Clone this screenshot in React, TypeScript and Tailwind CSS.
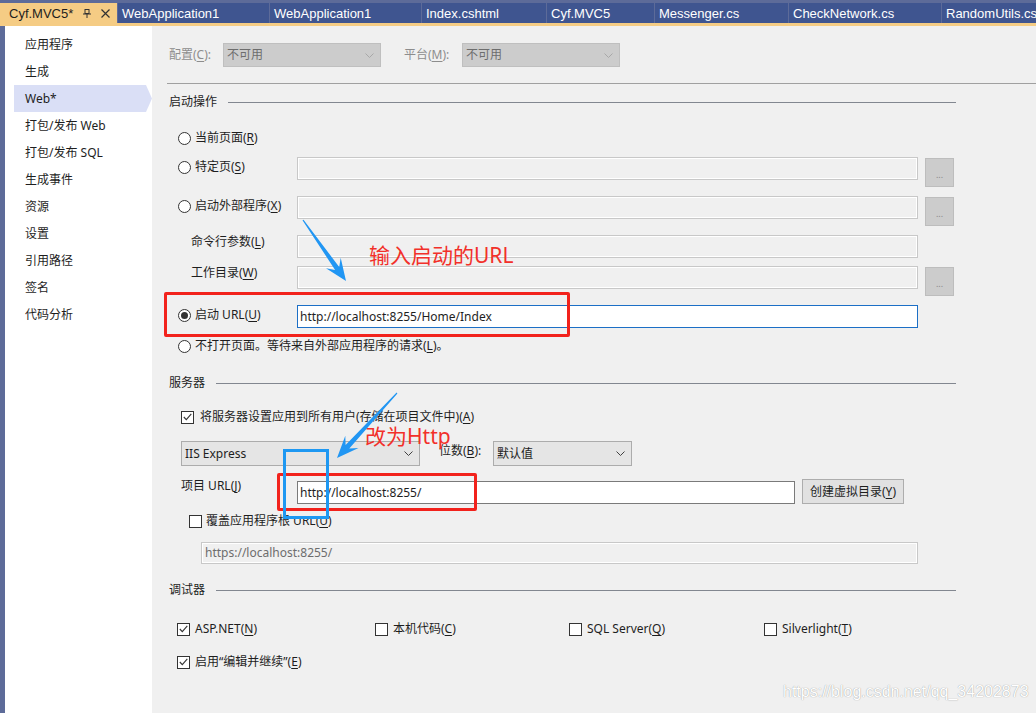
import React from "react";

const tabs = [
  { label: "WebApplication1", w: "w-[151px]" },
  { label: "WebApplication1", w: "w-[151px]" },
  { label: "Index.cshtml", w: "w-[124px]" },
  { label: "Cyf.MVC5", w: "w-[107px]" },
  { label: "Messenger.cs", w: "w-[133px]" },
  { label: "CheckNetwork.cs", w: "w-[152px]" },
  { label: "RandomUtils.cs", w: "flex-1" },
];

const navItems = [
  "应用程序",
  "生成",
  "Web*",
  "打包/发布 Web",
  "打包/发布 SQL",
  "生成事件",
  "资源",
  "设置",
  "引用路径",
  "签名",
  "代码分析",
];

function U({ children }: { children: React.ReactNode }) {
  return <span className="underline underline-offset-[2px]">{children}</span>;
}

function Radio({ checked = false }: { checked?: boolean }) {
  return (
    <span className="w-[13px] h-[13px] shrink-0 rounded-full border border-[#333333] bg-white flex items-center justify-center">
      {checked && <span className="w-[7px] h-[7px] rounded-full bg-[#333333]" />}
    </span>
  );
}

function Check({ checked = false }: { checked?: boolean }) {
  return (
    <span className="w-[13px] h-[13px] shrink-0 border border-[#333333] bg-white flex items-center justify-center">
      {checked && (
        <svg width="9" height="8" viewBox="0 0 9 8">
          <polyline points="0.8,4 3.3,6.6 8.3,0.8" fill="none" stroke="#333333" strokeWidth="1.1" />
        </svg>
      )}
    </span>
  );
}

function Chevron({ color }: { color: string }) {
  return (
    <svg width="9" height="5" viewBox="0 0 9 5">
      <polyline points="0.5,0.5 4.5,4.5 8.5,0.5" fill="none" stroke={color} strokeWidth="1" />
    </svg>
  );
}

function DisabledInput({ className = "", children }: { className?: string; children?: React.ReactNode }) {
  return (
    <div
      className={
        "border border-[#c8c8c8] bg-[#f0f0f0] shadow-[inset_0_0_0_1px_#ffffff] flex items-center pl-[3px] text-[#6d6d6d] " +
        className
      }
    >
      {children}
    </div>
  );
}

function Dots({ className = "" }: { className?: string }) {
  return (
    <div
      className={
        "w-[29px] h-[29px] bg-[#cccccc] border border-[#bdbdbd] flex items-end justify-center pb-[7px] text-[9px] leading-none text-[#8a8a8a] " +
        className
      }
    >
      ...
    </div>
  );
}

function Header({ children, className = "" }: { children: React.ReactNode; className?: string }) {
  return (
    <div className={"flex items-center h-[16px] w-[787px] " + className}>
      <span>{children}</span>
      <div className="flex-1 h-px bg-[#828790] ml-[11px]" />
    </div>
  );
}

function arrowPoints(tx: number, ty: number, px: number, py: number, L: number, W: number, b: number) {
  const dx = px - tx;
  const dy = py - ty;
  const len = Math.hypot(dx, dy);
  const ux = dx / len;
  const uy = dy / len;
  const nx = -uy;
  const ny = ux;
  const bx = px - L * ux;
  const by = py - L * uy;
  const mx = px - L * 0.7 * ux;
  const my = py - L * 0.7 * uy;
  return [
    [tx + 0.6 * nx, ty + 0.6 * ny],
    [mx + b * nx, my + b * ny],
    [bx + W * nx, by + W * ny],
    [px, py],
    [bx - W * nx, by - W * ny],
    [mx - b * nx, my - b * ny],
    [tx - 0.6 * nx, ty - 0.6 * ny],
  ]
    .map((p) => p[0].toFixed(1) + "," + p[1].toFixed(1))
    .join(" ");
}

export default function App() {
  return (
    <div className="relative w-[1036px] h-[713px] overflow-hidden bg-[#f0f0f0] font-['Noto_Sans','Noto_Sans_CJK_SC',sans-serif] text-[#1e1e1e]">
      {/* tab strip */}
      <div className="h-[26px] bg-[#5d6b99] pt-[3px] flex flex-col">
        <div className="h-[20px] flex gap-[1px] font-['Liberation_Sans','Noto_Sans_CJK_SC',sans-serif] text-[13px] leading-none">
          <div className="w-[117px] bg-[#f5cc84] flex items-center pl-[9px] text-[#1e1e1e]">
            <span>Cyf.MVC5*</span>
            <svg className="ml-[10px]" width="8" height="9" viewBox="0 0 8 9">
              <rect x="2" y="0.5" width="4" height="4" fill="none" stroke="#333" strokeWidth="1" />
              <line x1="0" y1="5" x2="8" y2="5" stroke="#333" strokeWidth="1" />
              <line x1="4" y1="5" x2="4" y2="9" stroke="#333" strokeWidth="1" />
            </svg>
            <svg className="ml-[10px]" width="9" height="9" viewBox="0 0 9 9">
              <path d="M0.5 0.5 L8.5 8.5 M8.5 0.5 L0.5 8.5" stroke="#333" strokeWidth="1.2" />
            </svg>
          </div>
          {tabs.map((t, i) => (
            <div key={i} className={t.w + " bg-[#3f5590] flex items-center pl-[4px] text-white whitespace-nowrap overflow-hidden"}>
              {t.label}
            </div>
          ))}
        </div>
        <div className="h-[3px] bg-[#f5cc84]" />
      </div>

      <div className="flex h-[687px]">
        <div className="w-[5px] bg-[#5d6b99]" />

        {/* sidebar */}
        <div className="w-[147px] bg-white pt-[5px] text-[12px] leading-none">
          {navItems.map((item) =>
            item === "Web*" ? (
              <div key={item} className="relative ml-[9px] w-[132px] h-[27px] bg-[#dadff6] flex items-center pl-[11px]">
                {item}
                <div className="absolute left-full top-0 h-full w-[6px] bg-[#dadff6] [clip-path:polygon(0_0,100%_50%,0_100%)]" />
              </div>
            ) : (
              <div key={item} className="h-[27px] flex items-center pl-[20px]">
                {item}
              </div>
            )
          )}
        </div>

        {/* main page */}
        <div className="flex-1 pl-[17px] pt-[17px] text-[12px] leading-none">
          <div className="flex items-center h-[24px]">
            <span className="w-[54px] text-[#8d8d8d]">
              配置(<U>C</U>):
            </span>
            <div className="w-[158px] h-full bg-[#cccccc] border border-[#bfbfbf] flex items-center justify-between pl-[3px] pr-[6px] text-[#6d6d6d]">
              <span>不可用</span>
              <Chevron color="#a8a8a8" />
            </div>
            <span className="ml-[23px] w-[58px] text-[#8d8d8d]">
              平台(<U>M</U>):
            </span>
            <div className="w-[158px] h-full bg-[#cccccc] border border-[#bfbfbf] flex items-center justify-between pl-[3px] pr-[6px] text-[#6d6d6d]">
              <span>不可用</span>
              <Chevron color="#a8a8a8" />
            </div>
          </div>

          <div className="mt-[16px] -ml-[2px] h-px bg-[#a0a0a0]" />

          <Header className="mt-[10px]">启动操作</Header>

          <div className="mt-[20px] ml-[9px] flex items-center h-[16px] gap-[4px]">
            <Radio />
            <span>
              当前页面(<U>R</U>)
            </span>
          </div>

          <div className="mt-[11px] ml-[9px] flex items-start h-[30px]">
            <div className="w-[119px] h-[20px] flex items-center gap-[4px]">
              <Radio />
              <span>
                特定页(<U>S</U>)
              </span>
            </div>
            <DisabledInput className="w-[621px] h-[23px]" />
            <Dots className="ml-[7px] mt-[1px]" />
          </div>

          <div className="mt-[9px] ml-[9px] flex items-start h-[30px]">
            <div className="w-[119px] h-[20px] flex items-center gap-[4px]">
              <Radio />
              <span>
                启动外部程序(<U>X</U>)
              </span>
            </div>
            <DisabledInput className="w-[621px] h-[23px]" />
            <Dots className="ml-[7px] mt-[1px]" />
          </div>

          <div className="mt-[9px] ml-[9px] flex items-start h-[23px]">
            <div className="w-[119px] h-[14px] flex items-center pl-[13px]">
              命令行参数(<U>L</U>)
            </div>
            <DisabledInput className="w-[621px] h-[23px]" />
          </div>

          <div className="mt-[8px] ml-[9px] flex items-start h-[30px]">
            <div className="w-[119px] h-[14px] flex items-center pl-[13px]">
              工作目录(<U>W</U>)
            </div>
            <DisabledInput className="w-[621px] h-[23px]" />
            <Dots className="ml-[7px] mt-[1px]" />
          </div>

          <div className="mt-[9px] ml-[9px] flex items-start h-[23px]">
            <div className="w-[119px] h-[20px] flex items-center gap-[4px]">
              <Radio checked />
              <span>
                启动 URL(<U>U</U>)
              </span>
            </div>
            <div className="w-[621px] h-[23px] bg-white border border-[#1c6fc6] flex items-center pl-[2px]">
              http://localhost:8255/Home/Index
            </div>
          </div>

          <div className="mt-[10px] ml-[9px] flex items-center h-[16px] gap-[4px]">
            <Radio />
            <span>
              不打开页面。等待来自外部应用程序的请求(<U>L</U>)。
            </span>
          </div>

          <Header className="mt-[21px]">服务器</Header>

          <div className="mt-[18px] ml-[12px] flex items-center h-[16px] gap-[6px]">
            <Check checked />
            <span>
              将服务器设置应用到所有用户(存储在项目文件中)(<U>A</U>)
            </span>
          </div>

          <div className="mt-[16px] ml-[12px] flex items-start h-[25px]">
            <div className="w-[239px] h-[25px] bg-[#e5e5e5] border border-[#acacac] flex items-center justify-between pl-[3px] pr-[6px]">
              <span>IIS Express</span>
              <Chevron color="#404040" />
            </div>
            <div className="ml-[19px] w-[54px] h-[20px] flex items-center">
              位数(<U>B</U>):
            </div>
            <div className="w-[139px] h-[25px] bg-[#e5e5e5] border border-[#acacac] flex items-center justify-between pl-[3px] pr-[6px]">
              <span>默认值</span>
              <Chevron color="#404040" />
            </div>
          </div>

          <div className="mt-[13px] ml-[12px] flex items-start h-[25px]">
            <div className="w-[116px] h-[14px] flex items-center">
              项目 URL(<U>J</U>)
            </div>
            <div className="mt-[2px] w-[498px] h-[23px] bg-white border border-[#7a7a7a] flex items-center pl-[2px]">
              http://localhost:8255/
            </div>
            <div className="ml-[7px] w-[102px] h-[25px] bg-[#e1e1e1] border border-[#adadad] flex items-center justify-center">
              创建虚拟目录(<U>Y</U>)
            </div>
          </div>

          <div className="mt-[9px] ml-[20px] flex items-center h-[16px] gap-[4px]">
            <Check />
            <span>
              覆盖应用程序根 URL(<U>U</U>)
            </span>
          </div>

          <DisabledInput className="mt-[13px] ml-[32px] w-[717px] h-[22px]">https://localhost:8255/</DisabledInput>

          <Header className="mt-[18px]">调试器</Header>

          <div className="mt-[23px] ml-[8px] flex items-center h-[16px]">
            <div className="w-[198px] flex items-center gap-[5px]">
              <Check checked />
              <span>
                ASP.NET(<U>N</U>)
              </span>
            </div>
            <div className="w-[194px] flex items-center gap-[5px]">
              <Check />
              <span>
                本机代码(<U>C</U>)
              </span>
            </div>
            <div className="w-[195px] flex items-center gap-[5px]">
              <Check />
              <span>
                SQL Server(<U>Q</U>)
              </span>
            </div>
            <div className="flex items-center gap-[5px]">
              <Check />
              <span>
                Silverlight(<U>T</U>)
              </span>
            </div>
          </div>

          <div className="mt-[17px] ml-[8px] flex items-center h-[16px] gap-[5px]">
            <Check checked />
            <span>
              启用“编辑并继续”(<U>E</U>)
            </span>
          </div>
        </div>
      </div>

      {/* annotations over the page */}
      <div className="absolute left-[164px] top-[292px] w-[406px] h-[45px] border-[3px] border-[#f2221c] rounded-[2px]" />
      <div className="absolute left-[277px] top-[473px] w-[200px] h-[38px] border-[3px] border-[#f2221c] rounded-[2px]" />
      <div className="absolute left-[283px] top-[449px] w-[46px] h-[70px] border-[3px] border-[#1e98f2]" />

      <div className="absolute left-[369px] top-[245px] text-[21px] leading-none text-[#f2302a]">输入启动的URL</div>
      <div className="absolute left-[365px] top-[426px] text-[21px] leading-none text-[#f2302a]">改为Http</div>

      <svg className="absolute left-0 top-0 pointer-events-none" width="1036" height="713">
        <polygon points={arrowPoints(303, 220, 346, 281, 22, 9, 2.5)} fill="#2196f3" />
        <polygon points={arrowPoints(397, 393, 337, 458, 22, 9, 2.5)} fill="#2196f3" />
      </svg>

      <div className="absolute left-[783px] top-[684px] font-['Liberation_Sans',sans-serif] text-[16px] leading-none text-white [text-shadow:0_0_1px_rgba(0,0,0,0.45)]">
        https://blog.csdn.net/qq_34202873
      </div>
    </div>
  );
}
